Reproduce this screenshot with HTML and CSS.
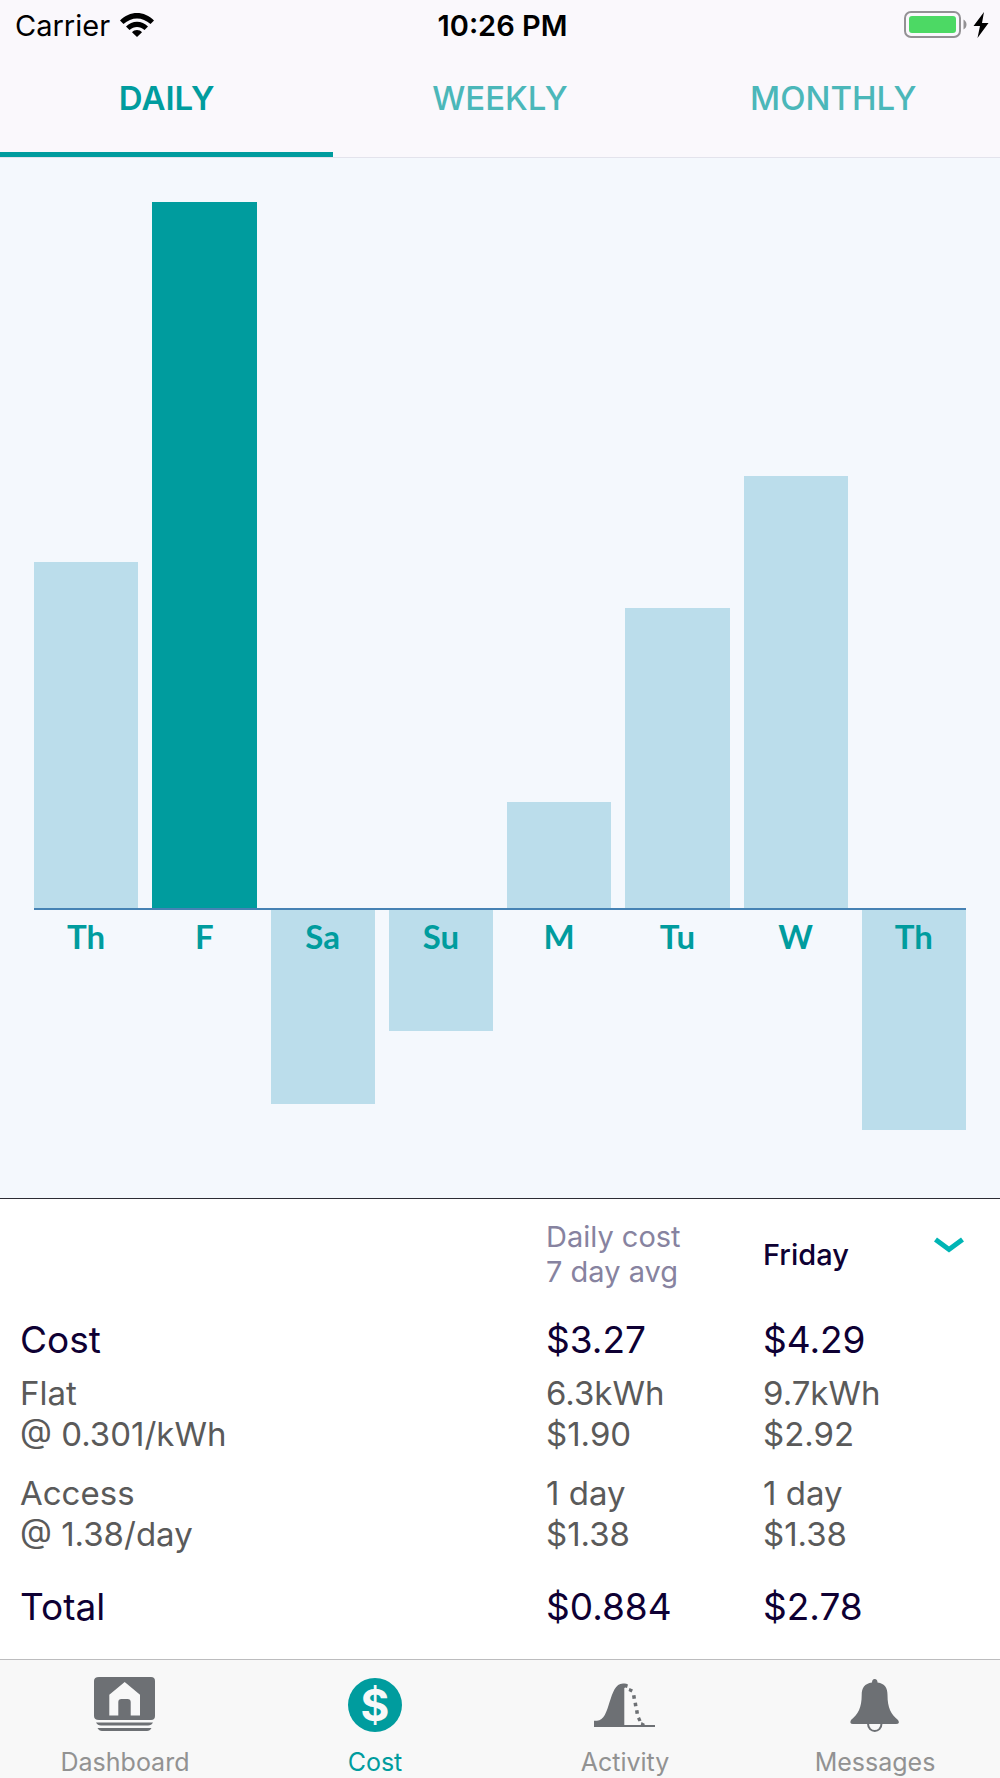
FILE: index.html
```html
<!DOCTYPE html>
<html lang="en">
<head>
  <meta charset="UTF-8">
  <meta name="viewport" content="width=device-width, initial-scale=1">
  <title>Cost</title>
  <link rel="stylesheet" href="styles.css">
</head>
<body>
  <header class="top">
    <div class="status-bar">
      <div class="status-left">
        <span>Carrier</span>
        <svg class="wifi" viewBox="0 0 34 24" aria-hidden="true">
          <path d="M0 7.5C9.500-2.500 24.500-2.500 34 7.500L30.500 11C22.500 3.500 11.500 3.500 3.500 11Z"/>
          <path d="M6 13.500C12 7 22 7 28 13.500L24.500 17C20 13 14 13 9.500 17Z"/>
          <path d="M12 19.200C14.500 16.300 19.500 16.300 22 19.200L17 24Z"/>
        </svg>
      </div>
      <div class="status-time">10:26 PM</div>
      <div class="status-right">
        <svg class="battery" viewBox="0 0 86 28" aria-hidden="true">
          <rect x="1" y="1" width="55" height="25" rx="6" fill="none" stroke="#939194" stroke-width="2"/>
          <rect x="5" y="5" width="47" height="17" rx="3" fill="#4cd964"/>
          <path d="M59.500 8.500C63.500 10.500 63.500 16.500 59.500 18.500Z" fill="#939194"/>
          <path d="M80 1L69.500 15H76L73.500 27L84.500 12H78Z"/>
        </svg>
      </div>
    </div>

    <nav class="period-tabs">
      <button type="button" class="period active">DAILY</button>
      <button type="button" class="period">WEEKLY</button>
      <button type="button" class="period">MONTHLY</button>
    </nav>
  </header>

  <main>
    <section class="chart">
      <div class="days">
        <button type="button" class="day">
          <span class="up"><span class="bar" style="height: 49%"></span></span>
          <span class="down"><span class="label">Th</span></span>
        </button>
        <button type="button" class="day selected">
          <span class="up"><span class="bar" style="height: 100%"></span></span>
          <span class="down"><span class="label">F</span></span>
        </button>
        <button type="button" class="day">
          <span class="up"></span>
          <span class="down"><span class="bar" style="height: 88%"></span><span class="label">Sa</span></span>
        </button>
        <button type="button" class="day">
          <span class="up"></span>
          <span class="down"><span class="bar" style="height: 55%"></span><span class="label">Su</span></span>
        </button>
        <button type="button" class="day">
          <span class="up"><span class="bar" style="height: 15%"></span></span>
          <span class="down"><span class="label">M</span></span>
        </button>
        <button type="button" class="day">
          <span class="up"><span class="bar" style="height: 42.5%"></span></span>
          <span class="down"><span class="label">Tu</span></span>
        </button>
        <button type="button" class="day">
          <span class="up"><span class="bar" style="height: 61.2%"></span></span>
          <span class="down"><span class="label">W</span></span>
        </button>
        <button type="button" class="day">
          <span class="up"></span>
          <span class="down"><span class="bar" style="height: 100%"></span><span class="label">Th</span></span>
        </button>
        <div class="axis"></div>
      </div>
    </section>

    <table class="costs">
      <thead>
        <tr>
          <td class="col-name"></td>
          <th class="col-avg" scope="col">Daily cost<br>7 day avg</th>
          <th class="col-day" scope="col">Friday</th>
          <td class="col-toggle">
            <button type="button" class="toggle" aria-label="Hide details">
              <svg viewBox="0 0 30 16" aria-hidden="true">
                <path d="M1.500 2.500L15 12.500L28.500 2.500" fill="none" stroke="#00b5b5" stroke-width="5"/>
              </svg>
            </button>
          </td>
        </tr>
      </thead>
      <tbody>
        <tr class="main-row">
          <th scope="row">Cost</th>
          <td>$3.27</td>
          <td colspan="2">$4.29</td>
        </tr>
        <tr class="detail">
          <th scope="row">Flat<br>@ 0.301/kWh</th>
          <td>6.3kWh<br>$1.90</td>
          <td colspan="2">9.7kWh<br>$2.92</td>
        </tr>
        <tr class="detail last">
          <th scope="row">Access<br>@ 1.38/day</th>
          <td>1 day<br>$1.38</td>
          <td colspan="2">1 day<br>$1.38</td>
        </tr>
        <tr class="main-row total">
          <th scope="row">Total</th>
          <td>$0.884</td>
          <td colspan="2">$2.78</td>
        </tr>
      </tbody>
    </table>
  </main>

  <nav class="tab-bar">
    <a href="#dashboard" class="tab">
      <svg viewBox="0 0 64 64" aria-hidden="true">
        <path fill-rule="evenodd" d="M6 3H58Q62 3 62 7V42Q62 46 58 46H6Q1 46 1 42V7Q1 3 6 3ZM31.700 8L16.300 20.800V41.500H25.300V28Q25.300 25 28.500 25H34.500Q37.700 25 37.700 28V41.500H47V20.800Z"/>
        <path d="M3 48.500H60Q58.500 51.500 55 51.500H8Q4.500 51.500 3 48.500Z"/>
        <path d="M4.500 54H58.500Q57 57 54 57H9Q6 57 4.500 54Z"/>
      </svg>
      <span>Dashboard</span>
    </a>
    <a href="#cost" class="tab active">
      <svg viewBox="0 0 64 64" aria-hidden="true">
        <circle cx="32" cy="31" r="27"/>
        <text class="dollar" x="32" y="47" text-anchor="middle">$</text>
      </svg>
      <span>Cost</span>
    </a>
    <a href="#activity" class="tab">
      <svg viewBox="0 0 64 64" aria-hidden="true">
        <path d="M1 53V46.700H4C18 46.700 15 9.500 30 9.500Q33 9 35 10.500L34 14Q32.500 13 31.300 14V51H62V53Z"/>
        <path d="M36.500 14L40 15.500L38.500 18.500L35.500 17ZM39 21.500L42.500 21L43 24.500L39.500 25ZM40.500 29L44 28.500L44.500 32L41 32.500ZM42 36.500L45.500 36L46 39.500L42.500 40ZM44 44.500L47 43L48.500 46.500L45.500 47.500ZM48.500 48L52 50L50.500 52H47.500Z"/>
      </svg>
      <span>Activity</span>
    </a>
    <a href="#messages" class="tab">
      <svg viewBox="0 0 64 64" aria-hidden="true">
        <path d="M31.700 5Q34.500 5 34.500 8.500C42 9.500 44.500 14 44.500 21C44.500 34 48 40 55 46Q57.500 50 53 50H10Q6 50 8 46C15 40 18.700 34 18.700 21C18.700 14 21.500 9.500 29 8.500Q29 5 31.700 5Z"/>
        <path d="M25 49.500C25 59.500 38.500 59.500 38.500 49.500" fill="none" stroke="#6d7074" stroke-width="2"/>
      </svg>
      <span>Messages</span>
    </a>
  </nav>
</body>
</html>
```
FILE: styles.css
```css
* {
  margin: 0;
  padding: 0;
  box-sizing: border-box;
}

body {
  display: flex;
  flex-direction: column;
  min-height: 100vh;
  font-family: Inter, 'Liberation Sans', sans-serif;
  background: #fff;
  color: #0e0033;
}

button {
  font: inherit;
  color: inherit;
  background: none;
  border: 0;
  cursor: pointer;
}

/* Status bar */
.top {
  background: #faf8fc;
  border-bottom: 1px solid #e3e3ec;
}

.status-bar {
  display: grid;
  grid-template-columns: 1fr auto 1fr;
  align-items: center;
  height: 50px;
  padding: 0 10px 0 15px;
  font-size: 29px;
  color: #000;
}

.status-left {
  display: flex;
  align-items: center;
  gap: 10px;
}

.wifi {
  width: 34px;
  height: 24px;
}

.status-time {
  font-weight: 600;
}

.status-right {
  display: flex;
  justify-content: flex-end;
}

.battery {
  width: 86px;
  height: 28px;
}

/* Daily / weekly / monthly */
.period-tabs {
  display: flex;
}

.period {
  flex: 1;
  height: 107px;
  padding-bottom: 6px;
  border-bottom: 5px solid transparent;
  font-size: 33px;
  font-weight: 500;
  color: #4bb7b9;
}

.period.active {
  color: #009c9e;
  border-bottom-color: #009c9e;
  font-weight: 600;
}

main {
  flex: 1;
  display: flex;
  flex-direction: column;
}

/* Chart */
.chart {
  flex: 1;
  display: flex;
  min-height: 500px;
  padding: 44px 34px 68px;
  background: #f4f8fd;
  border-bottom: 1px solid #2c2c34;
}

.days {
  flex: 1;
  position: relative;
  display: grid;
  grid-template-columns: repeat(8, 1fr);
  grid-template-rows: 706fr 2px 220fr;
  column-gap: 14px;
}

.day {
  grid-row: 1 / 4;
  display: grid;
  grid-template-rows: subgrid;
}

/* runs across the columns, over the bars */
.axis {
  position: absolute;
  inset: 0;
  grid-row: 2 / 3;
  background: #4682b4;
}

.up {
  grid-row: 1;
  display: flex;
  align-items: flex-end;
}

.down {
  grid-row: 3;
  display: grid;
  justify-items: center;
  align-items: start;
}

.bar {
  width: 100%;
  background: #bbddeb;
}

.down .bar,
.label {
  grid-area: 1 / 1;
}

.selected .bar {
  background: #009c9e;
}

.label {
  padding-top: 6px;
  font-family: Lato, sans-serif;
  font-size: 33px;
  font-weight: 700;
  line-height: 40px;
  color: #009c9e;
}

/* Cost table */
.costs {
  width: 100%;
  table-layout: fixed;
  border-collapse: collapse;
  text-align: left;
}

.costs th {
  font-weight: 400;
}

.costs th:first-child {
  padding-left: 20px;
}

.col-name {
  width: 54.6%;
}

.col-avg {
  width: 21.7%;
}

thead th {
  padding: 20px 0 26px;
  font-size: 29px;
  line-height: 35px;
}

.costs .col-avg {
  color: #8783a0;
}

.costs .col-day {
  font-weight: 500;
}

.col-toggle {
  width: 100px;
  padding: 20px 36px 0 0;
  text-align: right;
  vertical-align: top;
}

.toggle {
  height: 52px;
}

.toggle svg {
  display: block;
  width: 30px;
  height: 16px;
}

.main-row > * {
  padding-bottom: 8px;
  font-size: 37px;
  line-height: 50px;
}

.detail > * {
  padding-bottom: 18px;
  font-size: 33px;
  line-height: 41px;
  color: #5a5a5a;
}

.last > *,
.total > * {
  padding-bottom: 27px;
}

/* Bottom navigation */
.tab-bar {
  display: flex;
  background: #f8f8f8;
  border-top: 1px solid #bcbcbe;
}

.tab {
  flex: 1;
  display: flex;
  flex-direction: column;
  align-items: center;
  gap: 10px;
  padding: 14px 0 2px;
  font-size: 25px;
  line-height: 28px;
  color: #929292;
  text-decoration: none;
}

.tab svg {
  width: 64px;
  height: 64px;
  fill: #6d7074;
}

.tab.active {
  color: #009c9e;
}

.tab.active svg {
  fill: #009c9e;
}

.tab .dollar {
  fill: #f8f8f8;
  font-size: 44px;
  font-weight: 700;
}
```
